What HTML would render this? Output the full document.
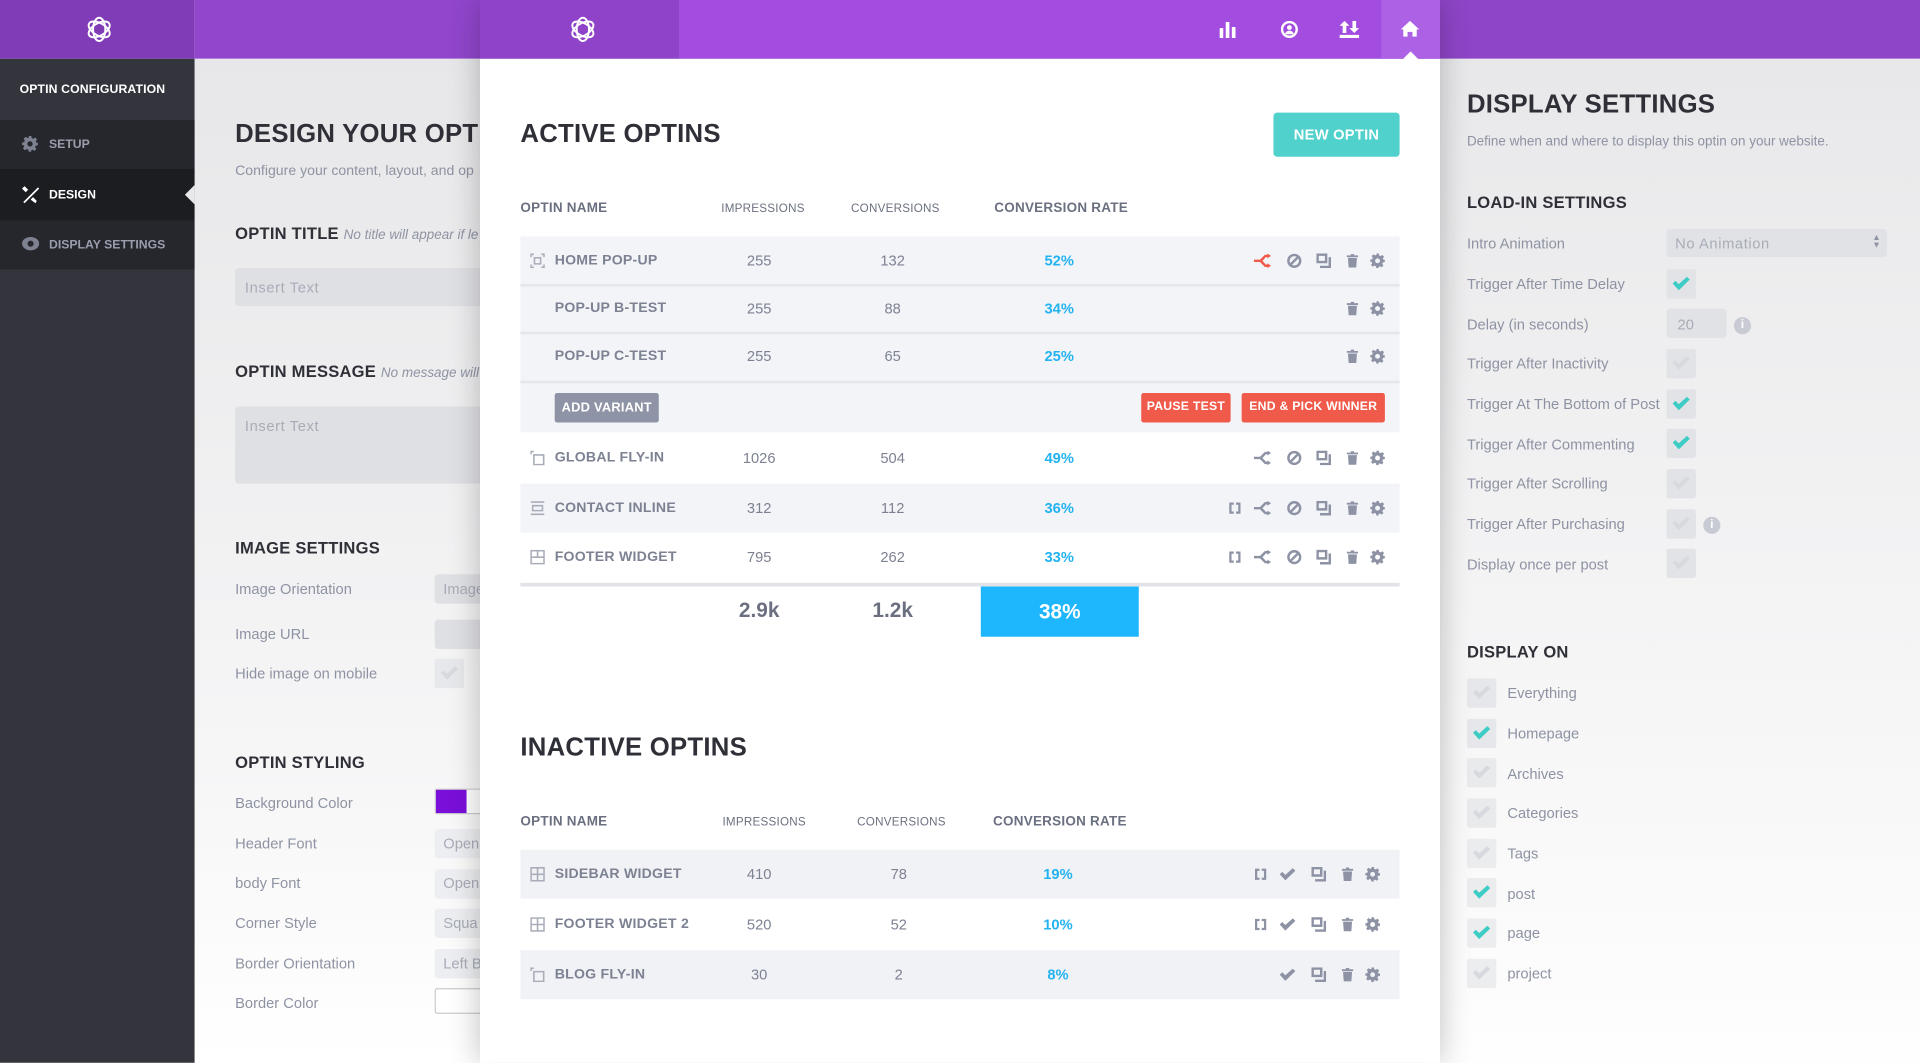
<!DOCTYPE html>
<html><head><meta charset="utf-8">
<style>
*{margin:0;padding:0;box-sizing:border-box}
html,body{width:1920px;height:1063px;overflow:hidden;background:#fff}
#w{position:absolute;left:0;top:0;width:1568px;height:868px;transform:scale(1.22449);transform-origin:0 0;font-family:"Liberation Sans",sans-serif;overflow:hidden}
.a{position:absolute;white-space:nowrap}
.lbl{font-size:12px;color:#8e93a3}
.h2{font-size:13.5px;font-weight:bold;color:#2f3037;letter-spacing:.2px}
.h1{font-size:21px;font-weight:bold;color:#2f3037;letter-spacing:.2px}
.inp{position:absolute;background:#dfe0e4;border-radius:3px}
.cb{position:absolute;width:24px;height:24px;background:#e2e3e7;border-radius:2px}
.cb svg{position:absolute;left:5px;top:6px}
.th{font-size:9.5px;color:#6b7080;letter-spacing:.2px}
.thb{font-size:11px;font-weight:bold;color:#6b7080;letter-spacing:.2px}
.row{position:absolute;left:425px;width:718px}
.row>div{line-height:16px}
.nm{position:absolute;left:28px;top:0;font-size:11.5px;font-weight:bold;color:#7d8293;letter-spacing:.2px}
.num{position:absolute;font-size:12px;color:#7d8293;transform:translateX(-50%)}
.pct{position:absolute;font-size:12px;font-weight:bold;color:#23b3f0;transform:translateX(-50%)}
.ic{position:absolute}
.btn{position:absolute;color:#fff;font-size:10.5px;font-weight:bold;letter-spacing:.2px;border-radius:2px;text-align:center}
</style></head><body>
<div id="w">
<svg width="0" height="0" style="position:absolute">
<defs>
<symbol id="gear" viewBox="0 0 12 12"><path fill="currentColor" d="M5 0h2l.3 1.6 1.2.5 1.4-.9 1.4 1.4-.9 1.4.5 1.2L12 5v2l-1.6.3-.5 1.2.9 1.4-1.4 1.4-1.4-.9-1.2.5L7 12H5l-.3-1.6-1.2-.5-1.4.9-1.4-1.4.9-1.4-.5-1.2L0 7V5l1.6-.3.5-1.2-.9-1.4 1.4-1.4 1.4.9 1.2-.5zM6 4a2 2 0 100 4 2 2 0 000-4z"/></symbol>
<symbol id="trash" viewBox="0 0 12 12"><path fill="currentColor" d="M4.5 0h3v1.2H11v1.6H1V1.2h3.5zM2 3.5h8l-.6 8.5H2.6z"/></symbol>
<symbol id="dup" viewBox="0 0 12 12"><path fill="currentColor" d="M0 0h9v8H0zM2 2v4h5V2zM10 3h2v9H3v-2h7z"/></symbol>
<symbol id="ban" viewBox="0 0 12 12"><g fill="none" stroke="currentColor" stroke-width="2"><circle cx="6" cy="6" r="4.8"/><path d="M2.8 9.2L9.2 2.8"/></g></symbol>
<symbol id="split" viewBox="0 0 14 12"><path fill="currentColor" d="M0 5h5l4-4h2V0l3 2-3 2V3H9.8L7 6l2.8 3H11V8l3 2-3 2v-1H9L5 7H0z"/></symbol>
<symbol id="brk" viewBox="0 0 12 12"><path fill="currentColor" d="M1 1h4v2H3v6h2v2H1zM7 1h4v10H7V9h2V3H7z"/></symbol>
<symbol id="chk" viewBox="0 0 14 11"><path fill="currentColor" d="M0 5.5l2.2-2.2L5 6 11.7 0 14 2.3 5 11z"/></symbol>
<symbol id="logo" viewBox="0 0 24 24"><g fill="none" stroke="#fff" stroke-width="1.6"><ellipse cx="12" cy="12" rx="9.5" ry="5" transform="rotate(90 12 12)"/><ellipse cx="12" cy="12" rx="9.5" ry="5" transform="rotate(30 12 12)"/><ellipse cx="12" cy="12" rx="9.5" ry="5" transform="rotate(-30 12 12)"/></g></symbol>
</defs></svg>

<!-- top bars -->
<div class="a" style="left:0;top:0;width:159px;height:48px;background:#803cb7"></div>
<div class="a" style="left:159px;top:0;width:233px;height:48px;background:#9146cc"></div>
<div class="a" style="left:1176px;top:0;width:392px;height:48px;background:#8e45c7"></div>
<svg class="a" style="left:69px;top:12px" width="24" height="24"><use href="#logo"/></svg>

<!-- sidebar -->
<div class="a" style="left:0;top:48px;width:159px;height:820px;background:#33343c"></div>
<div class="a" style="left:16px;top:68px;font-size:10px;font-weight:bold;color:#fff;letter-spacing:.1px">OPTIN CONFIGURATION</div>
<div class="a" style="left:0;top:98px;width:159px;height:40px;background:#26272d"></div>
<svg class="a" style="left:18px;top:111px;color:#7d8190" width="13" height="13"><use href="#gear"/></svg>
<div class="a" style="left:40px;top:113px;font-size:10px;font-weight:bold;color:#9a9eac">SETUP</div>
<div class="a" style="left:0;top:138px;width:159px;height:42px;background:#1c1d21"></div>
<svg class="a" style="left:18px;top:152px" width="14" height="14" viewBox="0 0 14 14"><path fill="#fff" d="M2 0l3 3-2 2-3-3zM9 9l3 3-1 2-4-3zM1 13L13 1l1 1L2 14z"/></svg>
<div class="a" style="left:40px;top:154px;font-size:10px;font-weight:bold;color:#fff">DESIGN</div>
<div class="a" style="left:151px;top:151px;width:0;height:0;border-top:8px solid transparent;border-bottom:8px solid transparent;border-right:8px solid #e8e8ea"></div>
<div class="a" style="left:0;top:180px;width:159px;height:40px;background:#26272d"></div>
<svg class="a" style="left:18px;top:193px" width="14" height="12" viewBox="0 0 14 12"><ellipse cx="7" cy="6" rx="7" ry="5.5" fill="#7d8190"/><circle cx="7" cy="6" r="2.5" fill="#26272d"/></svg>
<div class="a" style="left:40px;top:195px;font-size:10px;font-weight:bold;color:#9a9eac">DISPLAY SETTINGS</div>

<!-- left content -->
<div class="a" style="left:159px;top:48px;width:233px;height:820px;background:linear-gradient(#e7e7e9,#f6f6f7 70%,#fff)"></div>
<div class="a h1" style="left:192px;top:98px">DESIGN YOUR OPT</div>
<div class="a lbl" style="left:192px;top:134px;font-size:11.5px">Configure your content, layout, and op</div>
<div class="a h2" style="left:192px;top:183px">OPTIN TITLE <span style="font-weight:normal;font-style:italic;color:#8e93a3;font-size:11px;letter-spacing:0">No title will appear if le</span></div>
<div class="inp" style="left:192px;top:219px;width:220px;height:31px"></div>
<div class="a" style="left:200px;top:228px;font-size:12px;color:#a8acb8;letter-spacing:.5px">Insert Text</div>
<div class="a h2" style="left:192px;top:296px">OPTIN MESSAGE <span style="font-weight:normal;font-style:italic;color:#8e93a3;font-size:11px;letter-spacing:0">No message will a</span></div>
<div class="inp" style="left:192px;top:332px;width:220px;height:63px"></div>
<div class="a" style="left:200px;top:341px;font-size:12px;color:#a8acb8;letter-spacing:.5px">Insert Text</div>
<div class="a h2" style="left:192px;top:440px">IMAGE SETTINGS</div>
<div class="a lbl" style="left:192px;top:474px">Image Orientation</div>
<div class="inp" style="left:355px;top:469px;width:60px;height:24px"></div>
<div class="a" style="left:362px;top:474px;font-size:12px;color:#a8acb8">Image</div>
<div class="a lbl" style="left:192px;top:511px">Image URL</div>
<div class="inp" style="left:355px;top:506px;width:60px;height:24px"></div>
<div class="a lbl" style="left:192px;top:543px">Hide image on mobile</div>
<div class="cb" style="left:355px;top:538px;width:24px;height:24px;background:#e7e8eb"><svg width="14" height="11" style="color:#d8dade"><use href="#chk"/></svg></div>
<div class="a h2" style="left:192px;top:615px">OPTIN STYLING</div>
<div class="a lbl" style="left:192px;top:649px">Background Color</div>
<div class="a" style="left:355px;top:644px;width:60px;height:21px;border:1px solid #ccc;background:#fff;border-radius:2px"><div style="width:25px;height:19px;background:#7a0fd9"></div></div>
<div class="a lbl" style="left:192px;top:682px">Header Font</div>
<div class="inp" style="left:355px;top:677px;width:60px;height:24px;background:#eceef1"></div>
<div class="a" style="left:362px;top:682px;font-size:12px;color:#a8acb8">Open</div>
<div class="a lbl" style="left:192px;top:714px">body Font</div>
<div class="inp" style="left:355px;top:710px;width:60px;height:24px;background:#eceef1"></div>
<div class="a" style="left:362px;top:714px;font-size:12px;color:#a8acb8">Open</div>
<div class="a lbl" style="left:192px;top:747px">Corner Style</div>
<div class="inp" style="left:355px;top:742px;width:60px;height:24px;background:#eceef1"></div>
<div class="a" style="left:362px;top:747px;font-size:12px;color:#a8acb8">Squa</div>
<div class="a lbl" style="left:192px;top:780px">Border Orientation</div>
<div class="inp" style="left:355px;top:775px;width:60px;height:24px;background:#eceef1"></div>
<div class="a" style="left:362px;top:780px;font-size:12px;color:#a8acb8">Left B</div>
<div class="a lbl" style="left:192px;top:812px">Border Color</div>
<div class="a" style="left:355px;top:807px;width:60px;height:21px;border:1px solid #ccc;background:#fff;border-radius:2px"></div>

<!-- right panel -->
<div class="a" style="left:1176px;top:48px;width:392px;height:820px;background:linear-gradient(#e8e8ea,#f5f5f6 60%,#fefefe)"></div>
<div class="a h1" style="left:1198px;top:74px">DISPLAY SETTINGS</div>
<div class="a lbl" style="left:1198px;top:110px;font-size:11px">Define when and where to display this optin on your website.</div>
<div class="a h2" style="left:1198px;top:158px">LOAD-IN SETTINGS</div>
<div class="a lbl" style="left:1198px;top:192px">Intro Animation</div>
<div class="inp" style="left:1361px;top:187px;width:180px;height:23px;background:#e1e2e6"></div>
<div class="a" style="left:1368px;top:192px;font-size:12px;color:#a8acb8;letter-spacing:.5px">No Animation</div>
<div class="a" style="left:1529px;top:192px;font-size:7px;color:#8e93a3;line-height:6px">▲<br>▼</div>
<div class="a lbl" style="left:1198px;top:225px">Trigger After Time Delay</div>
<div class="cb" style="left:1361px;top:220px"><svg width="14" height="11" style="color:#3ecdc4"><use href="#chk"/></svg></div>
<div class="a lbl" style="left:1198px;top:258px">Delay (in seconds)</div>
<div class="inp" style="left:1361px;top:252px;width:49px;height:24px;background:#e1e2e6"></div>
<div class="a" style="left:1370px;top:258px;font-size:12px;color:#a8acb8">20</div>
<div class="a" style="left:1416px;top:259px;width:14px;height:14px;border-radius:50%;background:#c8cbd3;color:#fff;font-size:10px;font-weight:bold;text-align:center;line-height:14px">i</div>
<div class="a lbl" style="left:1198px;top:290px">Trigger After Inactivity</div>
<div class="cb" style="left:1361px;top:285px"><svg width="14" height="11" style="color:#d7d9de"><use href="#chk"/></svg></div>
<div class="a lbl" style="left:1198px;top:323px">Trigger At The Bottom of Post</div>
<div class="cb" style="left:1361px;top:318px"><svg width="14" height="11" style="color:#3ecdc4"><use href="#chk"/></svg></div>
<div class="a lbl" style="left:1198px;top:356px">Trigger After Commenting</div>
<div class="cb" style="left:1361px;top:350px"><svg width="14" height="11" style="color:#3ecdc4"><use href="#chk"/></svg></div>
<div class="a lbl" style="left:1198px;top:388px">Trigger After Scrolling</div>
<div class="cb" style="left:1361px;top:383px"><svg width="14" height="11" style="color:#d7d9de"><use href="#chk"/></svg></div>
<div class="a lbl" style="left:1198px;top:421px">Trigger After Purchasing</div>
<div class="cb" style="left:1361px;top:416px"><svg width="14" height="11" style="color:#d7d9de"><use href="#chk"/></svg></div>
<div class="a" style="left:1391px;top:422px;width:14px;height:14px;border-radius:50%;background:#c8cbd3;color:#fff;font-size:10px;font-weight:bold;text-align:center;line-height:14px">i</div>
<div class="a lbl" style="left:1198px;top:454px">Display once per post</div>
<div class="cb" style="left:1361px;top:448px"><svg width="14" height="11" style="color:#d7d9de"><use href="#chk"/></svg></div>
<div class="a h2" style="left:1198px;top:525px">DISPLAY ON</div>
<div class="cb" style="left:1198px;top:554px;background:#e6e7ea"><svg width="14" height="11" style="color:#d7d9de"><use href="#chk"/></svg></div><div class="a lbl" style="left:1231px;top:559px">Everything</div>
<div class="cb" style="left:1198px;top:587px;background:#e6e7ea"><svg width="14" height="11" style="color:#3ecdc4"><use href="#chk"/></svg></div><div class="a lbl" style="left:1231px;top:592px">Homepage</div>
<div class="cb" style="left:1198px;top:619px;background:#e9eaec"><svg width="14" height="11" style="color:#d7d9de"><use href="#chk"/></svg></div><div class="a lbl" style="left:1231px;top:625px">Archives</div>
<div class="cb" style="left:1198px;top:652px;background:#e9eaec"><svg width="14" height="11" style="color:#d7d9de"><use href="#chk"/></svg></div><div class="a lbl" style="left:1231px;top:657px">Categories</div>
<div class="cb" style="left:1198px;top:685px;background:#ebecee"><svg width="14" height="11" style="color:#d7d9de"><use href="#chk"/></svg></div><div class="a lbl" style="left:1231px;top:690px">Tags</div>
<div class="cb" style="left:1198px;top:717px;background:#ebecee"><svg width="14" height="11" style="color:#3ecdc4"><use href="#chk"/></svg></div><div class="a lbl" style="left:1231px;top:723px">post</div>
<div class="cb" style="left:1198px;top:750px;background:#ecedef"><svg width="14" height="11" style="color:#3ecdc4"><use href="#chk"/></svg></div><div class="a lbl" style="left:1231px;top:755px">page</div>
<div class="cb" style="left:1198px;top:783px;background:#ecedef"><svg width="14" height="11" style="color:#d7d9de"><use href="#chk"/></svg></div><div class="a lbl" style="left:1231px;top:788px">project</div>

<!-- center panel -->
<div class="a" style="left:392px;top:0;width:784px;height:868px;background:#fff;box-shadow:0 0 24px rgba(0,0,0,.25)"></div>
<div class="a" style="left:392px;top:0;width:163px;height:48px;background:#8e43c9"></div>
<div class="a" style="left:555px;top:0;width:621px;height:48px;background:#a24ce0"></div>
<div class="a" style="left:1128px;top:0;width:48px;height:48px;background:#ad62e5"></div>
<div class="a" style="left:1145px;top:42px;width:0;height:0;border-left:7px solid transparent;border-right:7px solid transparent;border-bottom:7px solid #fff"></div>
<svg class="a" style="left:464px;top:12px" width="24" height="24"><use href="#logo"/></svg>
<svg class="a" style="left:996px;top:17px" width="14" height="14" viewBox="0 0 14 14"><path fill="#fff" d="M0 6h3v8H0zM5 1h3v13H5zM10 5h3v9h-3z"/></svg>
<svg class="a" style="left:1046px;top:17px" width="14" height="14" viewBox="0 0 14 14"><circle cx="7" cy="7" r="6" fill="none" stroke="#fff" stroke-width="2"/><circle cx="7" cy="5.5" r="2" fill="#fff"/><path fill="#fff" d="M3.5 11a3.5 3 0 017 0z"/></svg>
<svg class="a" style="left:1094px;top:17px" width="16" height="14" viewBox="0 0 16 14"><path fill="#fff" d="M4 0l4 4H5.5v6h-3V4H0zM10.5 0h3v6H16l-4 4-4-4h2.5zM0 11.5h16V14H0z"/></svg>
<svg class="a" style="left:1144px;top:17px" width="15" height="13" viewBox="0 0 15 13"><path fill="#fff" d="M7.5 0L15 7h-2v6H9.5V9h-4v4H2V7H0z"/></svg>

<div class="a h1" style="left:425px;top:98px">ACTIVE OPTINS</div>
<div class="btn" style="left:1040px;top:92px;width:103px;height:36px;line-height:36px;background:#50d1cc;font-size:12px;border-radius:3px">NEW OPTIN</div>

<div class="a thb" style="left:425px;top:164px">OPTIN NAME</div>
<div class="a th" style="left:589px;top:165px">IMPRESSIONS</div>
<div class="a th" style="left:695px;top:165px">CONVERSIONS</div>
<div class="a thb" style="left:812px;top:164px">CONVERSION RATE</div>

<!-- active rows -->
<div class="row" style="top:193px;height:160px;background:#f3f4f8"></div>
<div class="row" style="top:232px;height:2px;background:#e4e6ec"></div>
<div class="row" style="top:271px;height:2px;background:#e4e6ec"></div>
<div class="row" style="top:311px;height:2px;background:#e4e6ec"></div>

<div class="row" style="top:205px;height:16px">
 <svg class="ic" style="left:8px;top:2px" width="12" height="12" viewBox="0 0 12 12"><path fill="none" stroke="#a9adb9" stroke-width="1.3" d="M3.5 3.5h5v5h-5zM.7 3V.7H3M9 .7h2.3V3M11.3 9v2.3H9M3 11.3H.7V9"/></svg>
 <div class="nm">HOME POP-UP</div><div class="num" style="left:195px">255</div><div class="num" style="left:304px">132</div><div class="pct" style="left:440px">52%</div>
 <svg class="ic" style="left:599px;top:2px;color:#f05a4a" width="14" height="12"><use href="#split"/></svg>
 <svg class="ic" style="left:626px;top:2px;color:#8d93a5" width="12" height="12"><use href="#ban"/></svg>
 <svg class="ic" style="left:650px;top:2px;color:#8d93a5" width="12" height="12"><use href="#dup"/></svg>
 <svg class="ic" style="left:674px;top:2px;color:#8d93a5" width="11" height="12"><use href="#trash"/></svg>
 <svg class="ic" style="left:694px;top:2px;color:#8d93a5" width="12" height="12"><use href="#gear"/></svg>
</div>
<div class="row" style="top:244px;height:16px">
 <div class="nm">POP-UP B-TEST</div><div class="num" style="left:195px">255</div><div class="num" style="left:304px">88</div><div class="pct" style="left:440px">34%</div>
 <svg class="ic" style="left:674px;top:2px;color:#8d93a5" width="11" height="12"><use href="#trash"/></svg>
 <svg class="ic" style="left:694px;top:2px;color:#8d93a5" width="12" height="12"><use href="#gear"/></svg>
</div>
<div class="row" style="top:283px;height:16px">
 <div class="nm">POP-UP C-TEST</div><div class="num" style="left:195px">255</div><div class="num" style="left:304px">65</div><div class="pct" style="left:440px">25%</div>
 <svg class="ic" style="left:674px;top:2px;color:#8d93a5" width="11" height="12"><use href="#trash"/></svg>
 <svg class="ic" style="left:694px;top:2px;color:#8d93a5" width="12" height="12"><use href="#gear"/></svg>
</div>
<div class="btn" style="left:453px;top:321px;width:85px;height:24px;line-height:24px;background:#8e94a5">ADD VARIANT</div>
<div class="btn" style="left:932px;top:321px;width:73px;height:24px;line-height:24px;background:#f05a4a;font-size:10px">PAUSE TEST</div>
<div class="btn" style="left:1014px;top:321px;width:117px;height:24px;line-height:24px;background:#f05a4a;font-size:10px">END &amp; PICK WINNER</div>

<div class="row" style="top:366px;height:16px">
 <svg class="ic" style="left:8px;top:2px" width="12" height="12" viewBox="0 0 12 12"><path fill="none" stroke="#a9adb9" stroke-width="1.3" d="M3 3.5h8v8H3zM.7 3V.7H3"/></svg>
 <div class="nm">GLOBAL FLY-IN</div><div class="num" style="left:195px">1026</div><div class="num" style="left:304px">504</div><div class="pct" style="left:440px">49%</div>
 <svg class="ic" style="left:599px;top:2px;color:#8d93a5" width="14" height="12"><use href="#split"/></svg>
 <svg class="ic" style="left:626px;top:2px;color:#8d93a5" width="12" height="12"><use href="#ban"/></svg>
 <svg class="ic" style="left:650px;top:2px;color:#8d93a5" width="12" height="12"><use href="#dup"/></svg>
 <svg class="ic" style="left:674px;top:2px;color:#8d93a5" width="11" height="12"><use href="#trash"/></svg>
 <svg class="ic" style="left:694px;top:2px;color:#8d93a5" width="12" height="12"><use href="#gear"/></svg>
</div>
<div class="row" style="top:395px;height:40px;background:#f3f4f8"></div>
<div class="row" style="top:407px;height:16px">
 <svg class="ic" style="left:8px;top:2px" width="12" height="12" viewBox="0 0 12 12"><path fill="none" stroke="#a9adb9" stroke-width="1.3" d="M.5 1h11M2 4h8v4H2zM.5 11h11"/></svg>
 <div class="nm">CONTACT INLINE</div><div class="num" style="left:195px">312</div><div class="num" style="left:304px">112</div><div class="pct" style="left:440px">36%</div>
 <svg class="ic" style="left:578px;top:2px;color:#8d93a5" width="11" height="12"><use href="#brk"/></svg>
 <svg class="ic" style="left:599px;top:2px;color:#8d93a5" width="14" height="12"><use href="#split"/></svg>
 <svg class="ic" style="left:626px;top:2px;color:#8d93a5" width="12" height="12"><use href="#ban"/></svg>
 <svg class="ic" style="left:650px;top:2px;color:#8d93a5" width="12" height="12"><use href="#dup"/></svg>
 <svg class="ic" style="left:674px;top:2px;color:#8d93a5" width="11" height="12"><use href="#trash"/></svg>
 <svg class="ic" style="left:694px;top:2px;color:#8d93a5" width="12" height="12"><use href="#gear"/></svg>
</div>
<div class="row" style="top:447px;height:16px">
 <svg class="ic" style="left:8px;top:2px" width="12" height="12" viewBox="0 0 12 12"><path fill="none" stroke="#a9adb9" stroke-width="1.3" d="M.7.7h10.6v10.6H.7zM6 .7v5.3M.7 6h10.6"/></svg>
 <div class="nm">FOOTER WIDGET</div><div class="num" style="left:195px">795</div><div class="num" style="left:304px">262</div><div class="pct" style="left:440px">33%</div>
 <svg class="ic" style="left:578px;top:2px;color:#8d93a5" width="11" height="12"><use href="#brk"/></svg>
 <svg class="ic" style="left:599px;top:2px;color:#8d93a5" width="14" height="12"><use href="#split"/></svg>
 <svg class="ic" style="left:626px;top:2px;color:#8d93a5" width="12" height="12"><use href="#ban"/></svg>
 <svg class="ic" style="left:650px;top:2px;color:#8d93a5" width="12" height="12"><use href="#dup"/></svg>
 <svg class="ic" style="left:674px;top:2px;color:#8d93a5" width="11" height="12"><use href="#trash"/></svg>
 <svg class="ic" style="left:694px;top:2px;color:#8d93a5" width="12" height="12"><use href="#gear"/></svg>
</div>
<div class="row" style="top:476px;height:3px;background:#e1e3e8"></div>
<div class="a" style="left:620px;top:489px;font-size:17px;font-weight:bold;color:#6b7080;transform:translateX(-50%)">2.9k</div>
<div class="a" style="left:729px;top:489px;font-size:17px;font-weight:bold;color:#6b7080;transform:translateX(-50%)">1.2k</div>
<div class="a" style="left:801px;top:479px;width:129px;height:41px;background:#1eb7fd;color:#fff;font-size:17px;font-weight:bold;text-align:center;line-height:41px">38%</div>

<div class="a h1" style="left:425px;top:599px">INACTIVE OPTINS</div>
<div class="a thb" style="left:425px;top:665px">OPTIN NAME</div>
<div class="a th" style="left:590px;top:666px">IMPRESSIONS</div>
<div class="a th" style="left:700px;top:666px">CONVERSIONS</div>
<div class="a thb" style="left:811px;top:665px">CONVERSION RATE</div>

<div class="row" style="top:694px;height:40px;background:#f1f2f6"></div>
<div class="row" style="top:706px;height:16px">
 <svg class="ic" style="left:8px;top:2px" width="12" height="12" viewBox="0 0 12 12"><path fill="none" stroke="#a9adb9" stroke-width="1.3" d="M.7.7h10.6v10.6H.7zM6 .7v10.6M.7 6h10.6"/></svg>
 <div class="nm">SIDEBAR WIDGET</div><div class="num" style="left:195px">410</div><div class="num" style="left:309px">78</div><div class="pct" style="left:439px">19%</div>
 <svg class="ic" style="left:599px;top:2px;color:#8d93a5" width="11" height="12"><use href="#brk"/></svg>
 <svg class="ic" style="left:620px;top:3px;color:#8d93a5" width="13" height="10"><use href="#chk"/></svg>
 <svg class="ic" style="left:646px;top:2px;color:#8d93a5" width="12" height="12"><use href="#dup"/></svg>
 <svg class="ic" style="left:670px;top:2px;color:#8d93a5" width="11" height="12"><use href="#trash"/></svg>
 <svg class="ic" style="left:690px;top:2px;color:#8d93a5" width="12" height="12"><use href="#gear"/></svg>
</div>
<div class="row" style="top:747px;height:16px">
 <svg class="ic" style="left:8px;top:2px" width="12" height="12" viewBox="0 0 12 12"><path fill="none" stroke="#a9adb9" stroke-width="1.3" d="M.7.7h10.6v10.6H.7zM6 .7v10.6M.7 6h10.6"/></svg>
 <div class="nm">FOOTER WIDGET 2</div><div class="num" style="left:195px">520</div><div class="num" style="left:309px">52</div><div class="pct" style="left:439px">10%</div>
 <svg class="ic" style="left:599px;top:2px;color:#8d93a5" width="11" height="12"><use href="#brk"/></svg>
 <svg class="ic" style="left:620px;top:3px;color:#8d93a5" width="13" height="10"><use href="#chk"/></svg>
 <svg class="ic" style="left:646px;top:2px;color:#8d93a5" width="12" height="12"><use href="#dup"/></svg>
 <svg class="ic" style="left:670px;top:2px;color:#8d93a5" width="11" height="12"><use href="#trash"/></svg>
 <svg class="ic" style="left:690px;top:2px;color:#8d93a5" width="12" height="12"><use href="#gear"/></svg>
</div>
<div class="row" style="top:776px;height:40px;background:#f1f2f6"></div>
<div class="row" style="top:788px;height:16px">
 <svg class="ic" style="left:8px;top:2px" width="12" height="12" viewBox="0 0 12 12"><path fill="none" stroke="#a9adb9" stroke-width="1.3" d="M3 3.5h8v8H3zM.7 3V.7H3"/></svg>
 <div class="nm">BLOG FLY-IN</div><div class="num" style="left:195px">30</div><div class="num" style="left:309px">2</div><div class="pct" style="left:439px">8%</div>
 <svg class="ic" style="left:620px;top:3px;color:#8d93a5" width="13" height="10"><use href="#chk"/></svg>
 <svg class="ic" style="left:646px;top:2px;color:#8d93a5" width="12" height="12"><use href="#dup"/></svg>
 <svg class="ic" style="left:670px;top:2px;color:#8d93a5" width="11" height="12"><use href="#trash"/></svg>
 <svg class="ic" style="left:690px;top:2px;color:#8d93a5" width="12" height="12"><use href="#gear"/></svg>
</div>
</div>
</body></html>
